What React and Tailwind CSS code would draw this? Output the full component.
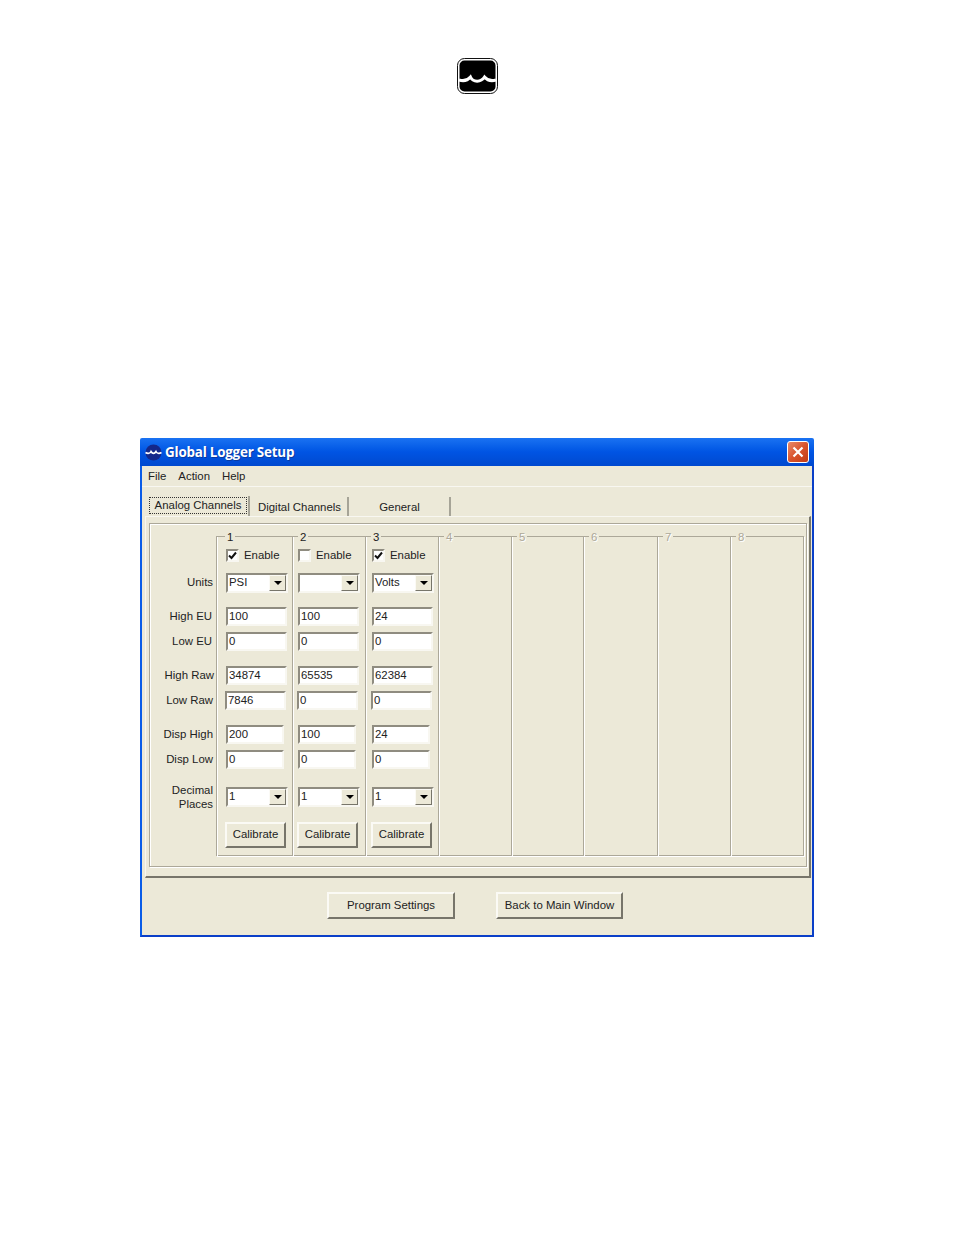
import React from "react";

const sunken =
  "border-2 border-t-[#8f8c80] border-l-[#8f8c80] border-r-[#f8f7f1] border-b-[#f8f7f1] bg-white";
const raised =
  "border-2 border-t-[#fbfaf5] border-l-[#fbfaf5] border-r-[#77756a] border-b-[#77756a] bg-[#ece9d8]";

const channels = [
  { n: "1", width: "w-[76px]", pad: "pl-[9px]", legend: "left-[8px]", on: true, units: "PSI", vals: ["100", "0", "34874", "7846", "200", "0"] },
  { n: "2", width: "w-[73px]", pad: "pl-[5px]", legend: "left-[5px]", on: false, units: "", vals: ["100", "0", "65535", "0", "100", "0"] },
  { n: "3", width: "w-[73px]", pad: "pl-[6px]", legend: "left-[5px]", on: true, units: "Volts", vals: ["24", "0", "62384", "0", "24", "0"] },
];

const disabled = [
  { n: "4", width: "w-[73px]" },
  { n: "5", width: "w-[72px]" },
  { n: "6", width: "w-[74px]" },
  { n: "7", width: "w-[73px]" },
  { n: "8", width: "w-[73px]" },
];

const valueRows = [
  { label: "High EU", mt: "mt-[14px]", cls: "w-[61px]", labelCls: "pr-[4px]" },
  { label: "Low EU", mt: "mt-[6px]", cls: "w-[61px]", labelCls: "pr-[4px]" },
  { label: "High Raw", mt: "mt-[15px]", cls: "w-[61px]", labelCls: "pr-[2px]" },
  { label: "Low Raw", mt: "mt-[6px]", cls: "w-[61px] -ml-px", labelCls: "pr-[3px]" },
  { label: "Disp High", mt: "mt-[15px]", cls: "w-[58px]", labelCls: "pr-[3px]" },
  { label: "Disp Low", mt: "mt-[6px]", cls: "w-[58px]", labelCls: "pr-[3px]" },
];

const Select = ({ value }) => (
  <div className={`${sunken} w-[62px] h-[20px] flex`}>
    <div className="flex-1 leading-[15px] pl-[1px]">{value}</div>
    <div className={`${raised} w-[17px] h-full flex items-center justify-center !border-[1.5px]`}>
      <div className="w-0 h-0 border-x-[4px] border-x-transparent border-t-[4px] border-t-black" />
    </div>
  </div>
);

const Channel = ({ c }) => (
  <div className={`${c.width} h-[320px] relative border-t border-l border-[#aca899] shadow-[inset_1px_0_0_#fff] ${c.pad}`}>
    <span className={`absolute -top-[7px] ${c.legend} bg-[#ece9d8] px-[2px] leading-[14px]`}>{c.n}</span>
    <div className="mt-[10px] h-[16px] flex items-center">
      <div className={`${sunken} w-[13px] h-[13px] flex items-center justify-center`}>
        {c.on && (
          <svg width="9" height="9" viewBox="0 0 9 9">
            <path d="M1 4.5 L3.5 7 L8 1.5" fill="none" stroke="#111" strokeWidth="2" />
          </svg>
        )}
      </div>
      <span className="ml-[5px] pt-[1px]">Enable</span>
    </div>
    <div className="mt-[10px]">
      <Select value={c.units} />
    </div>
    {valueRows.map((r, i) => (
      <div key={i} className={`${sunken} ${r.cls} ${r.mt} h-[19px] leading-[15px] pl-[1px]`}>
        {c.vals[i]}
      </div>
    ))}
    <div className="mt-[18px]">
      <Select value="1" />
    </div>
    <button className={`${raised} mt-[15px] -ml-px w-[61px] h-[26px] flex items-center justify-center`}>
      Calibrate
    </button>
  </div>
);

const App = () => {
  return (
    <div className="w-[954px] h-[1235px] bg-white overflow-hidden text-[#222] text-[11.4px] font-['Liberation_Sans',Arial,sans-serif]">
      <svg className="ml-[457px] mt-[58px] block" width="41" height="36" viewBox="0 0 41 36">
        <rect x="0.5" y="0.5" width="40" height="35" rx="7" fill="#fff" stroke="#111" />
        <rect x="2.5" y="2.5" width="36" height="31" rx="5" fill="#000" />
        <path d="M2 22 C7 23.5 11 22 13.5 19 C16 24.5 24 24.5 27.5 19 C30 22 34 23.5 39 22" fill="none" stroke="#fff" strokeWidth="3" />
      </svg>

      <div className="ml-[140px] mt-[344px] w-[674px] h-[499px] flex flex-col">
        {/* title bar */}
        <div className="h-[28px] flex items-center pl-[4px] pr-[5px] rounded-t-[2px] bg-gradient-to-b from-[#1a72f2] via-[#0054e3] to-[#0049cf]">
          <svg width="19" height="17" viewBox="0 0 19 17">
            <circle cx="9.5" cy="8.5" r="8" fill="#14288a" />
            <path d="M1.5 8.5 C4 10 6 9.5 7 7.5 C8.5 10 10.5 10 12 7.5 C13 9.5 15 10 17.5 8.5" fill="none" stroke="#fff" strokeWidth="1.6" />
          </svg>
          <span className="ml-[2px] pt-[1px] text-[13.4px] font-bold text-white font-['Open_Sans',sans-serif] [text-shadow:1px_1px_0_#0a3aa0] tracking-[-0.2px]">
            Global Logger Setup
          </span>
          <div className="ml-auto w-[22px] h-[22px] rounded-[3px] border border-white bg-gradient-to-br from-[#e88a6a] via-[#d9532c] to-[#c23c12] flex items-center justify-center">
            <svg width="12" height="12" viewBox="0 0 12 12">
              <path d="M1.5 1.5 L10.5 10.5 M10.5 1.5 L1.5 10.5" stroke="#fff" strokeWidth="2.2" />
            </svg>
          </div>
        </div>

        <div className="flex-1 bg-[#ece9d8] border-x-2 border-b-2 border-l-[#0a5ce8] border-r-[#0a3fc8] border-b-[#0a3fc8]">
          {/* menu */}
          <div className="h-[21px] flex items-center border-b border-[#f8f7f1] pl-[6px] pt-[1px]">
            <span>File</span>
            <span className="ml-[12px]">Action</span>
            <span className="ml-[12px]">Help</span>
          </div>

          {/* tabs */}
          <div className="mt-[10px] ml-[6px] h-[19px] flex">
            <div className="w-[102px] -mt-[1px] h-[20px] border-r-2 border-[#a6a497] pr-[1px] pl-[1px] pt-[1px]">
              <div className="h-[17px] border border-dotted border-[#333] flex items-center justify-center">Analog Channels</div>
            </div>
            <div className="ml-[1px] w-[98px] border-r-2 border-[#a6a497] flex items-center justify-center pt-[2px] pl-[1px]">Digital Channels</div>
            <div className="ml-[1px] w-[101px] border-r-2 border-[#a6a497] flex items-center justify-center pt-[2px]">General</div>
          </div>

          {/* tab panel */}
          <div className="ml-[3px] w-[666px] h-[362px] border border-t-[#f8f7f1] border-l-[#f8f7f1] border-r-2 border-b-2 border-r-[#77756a] border-b-[#77756a]">
            <div className="ml-[3px] mt-[6px] w-[658px] h-[344px] flex border border-[#aca899] shadow-[1px_1px_0_#fff,inset_1px_1px_0_#fff]">
              <div className="w-[66px] pt-[13px] text-right">
                <div className="h-[16px] mt-[10px]" />
                <div className="h-[20px] mt-[10px] pr-[3px] leading-[18px]">Units</div>
                {valueRows.map((r) => (
                  <div key={r.label} className={`h-[19px] ${r.mt} ${r.labelCls} leading-[19px]`}>
                    {r.label}
                  </div>
                ))}
                <div className="mt-[14px] pr-[3px] leading-[14px]">
                  Decimal
                  <br />
                  Places
                </div>
              </div>
              <div className="flex h-[320px] mt-[12px] border-b border-r border-[#aca899] shadow-[1px_1px_0_#fff]">
                {channels.map((c) => (
                  <Channel key={c.n} c={c} />
                ))}
                {disabled.map((d) => (
                  <div key={d.n} className={`${d.width} h-[320px] relative border-t border-l border-[#aca899] shadow-[inset_1px_0_0_#fff]`}>
                    <span className="absolute -top-[7px] left-[5px] bg-[#ece9d8] px-[2px] leading-[14px] text-[#aca899] [text-shadow:1px_1px_0_#fff]">
                      {d.n}
                    </span>
                  </div>
                ))}
              </div>
            </div>
          </div>

          {/* bottom buttons */}
          <div className="mt-[14px] ml-[185px] flex gap-[41px]">
            <button className={`${raised} w-[128px] h-[27px] flex items-center justify-center`}>Program Settings</button>
            <button className={`${raised} w-[127px] h-[27px] flex items-center justify-center`}>Back to Main Window</button>
          </div>
        </div>
      </div>
    </div>
  );
};

export default App;
